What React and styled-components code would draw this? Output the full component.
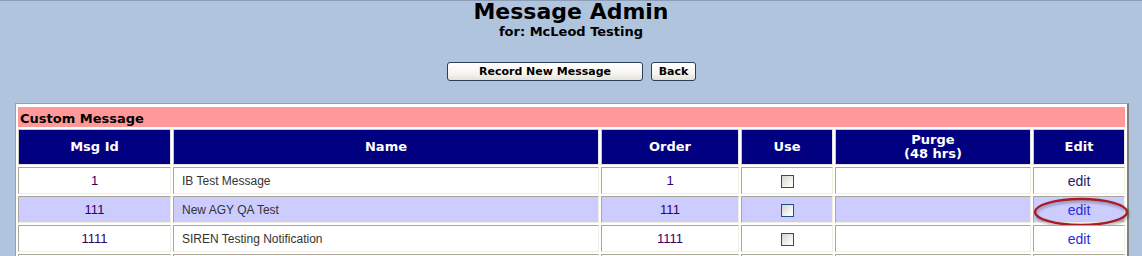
import React from 'react';
import styled, { createGlobalStyle } from 'styled-components';

const GlobalStyle = createGlobalStyle`
  * { box-sizing: border-box; }
  html, body { margin: 0; padding: 0; }
  body {
    background: #b0c4de;
    border-top: 1px solid #8c9db5;
    font-family: "DejaVu Sans", Verdana, sans-serif;
    height: 256px;
    overflow: hidden;
  }
`;

const Page = styled.div`
  display: flex;
  flex-direction: column;
`;

const Heading = styled.div`
  display: flex;
  flex-direction: column;
  align-items: center;
  color: #000;
  font-weight: bold;
`;

const Title = styled.h1`
  margin: 0;
  font-size: 22px;
  line-height: 22px;
  font-weight: bold;
`;

const Subtitle = styled.div`
  font-size: 13px;
  line-height: 16px;
  margin-top: 1px;
`;

const Toolbar = styled.div`
  display: flex;
  justify-content: center;
  gap: 8px;
  margin-top: 22px;
  margin-left: 1px;
`;

const Button = styled.button`
  width: ${p => p.$width}px;
  height: 19px;
  padding: 0;
  border: 1px solid #2b3f5c;
  border-radius: 3px;
  background: linear-gradient(#ffffff 0%, #f6f5f1 60%, #e3e1d8 100%);
  font-family: "DejaVu Sans", Verdana, sans-serif;
  font-size: 11px;
  font-weight: bold;
  color: #000;
  line-height: 17px;
  cursor: pointer;
`;

const Panel = styled.div`
  margin: 22px 0 0 15px;
  width: 1114px;
  background: #fff;
  border-top: 1px solid #a0a0a0;
  border-left: 1px solid #a0a0a0;
  border-right: 2px solid #808080;
  border-bottom: 2px solid #808080;
  padding: 3px 2px 2px 2px;
  display: flex;
  flex-direction: column;
  gap: 2px;
`;

const SectionTitle = styled.div`
  height: 20px;
  background: #ff9999;
  padding: 3px 0 0 2px;
  font-size: 13px;
  line-height: 17px;
  font-weight: bold;
  color: #000;
`;

const Row = styled.div`
  display: grid;
  grid-template-columns: 153px 426px 138px 92px 196px 92px;
  column-gap: 2px;
  height: ${p => (p.$head ? 36 : 27)}px;
`;

const Cell = styled.div`
  position: relative;
  display: flex;
  align-items: center;
  justify-content: ${p => (p.$left ? 'flex-start' : 'center')};
  padding-left: ${p => (p.$left ? 8 : 0)}px;
  border-top: 1px solid #aca899;
  border-left: 1px solid #aca899;
  border-bottom: 1px solid #f1efe2;
  border-right: 1px solid #f1efe2;
  background: ${p => p.$bg};
  font-family: "Liberation Sans", Arial, sans-serif;
  font-size: ${p => (p.$left ? 12 : 13)}px;
  color: ${p => (p.$left ? '#333' : '#330066')};
  white-space: nowrap;
`;

const HeadCell = styled(Cell)`
  background: #000080;
  color: #fff;
  font-family: "DejaVu Sans", Verdana, sans-serif;
  font-size: 13px;
  font-weight: bold;
  line-height: 14px;
  text-align: center;
  border-color: #c9c7bd #e8e6de #e8e6de #c9c7bd;
`;

const Check = styled.span`
  display: block;
  width: 13px;
  height: 13px;
  margin-top: 1px;
  border: 1px solid #1f5280;
  background: linear-gradient(135deg, #d3d3cc 0%, #f2f2ee 60%, #ffffff 100%);
`;

const EditLink = styled.a`
  font-family: "Liberation Sans", Arial, sans-serif;
  font-size: 14px;
  text-decoration: none;
  color: ${p => (p.$visited ? '#1c1c6e' : '#2b2bd9')};
  cursor: pointer;
`;

const Circle = styled.svg`
  position: absolute;
  left: -1px;
  top: 1px;
  width: 96px;
  height: 30px;
  overflow: visible;
  pointer-events: none;
`;

const columns = ['Msg Id', 'Name', 'Order', 'Use', ['Purge', '(48 hrs)'], 'Edit'];

const messages = [
  { id: '1', name: 'IB Test Message', order: '1', visited: true },
  { id: '111', name: 'New AGY QA Test', order: '111', circled: true },
  { id: '1111', name: 'SIREN Testing Notification', order: '1111' },
];

const App = () => {
  return (
    <>
      <GlobalStyle />
      <Page>
        <Heading>
          <Title>Message Admin</Title>
          <Subtitle>for: McLeod Testing</Subtitle>
        </Heading>

        <Toolbar>
          <Button $width={196}>Record New Message</Button>
          <Button $width={45}>Back</Button>
        </Toolbar>

        <Panel>
          <SectionTitle>Custom Message</SectionTitle>
          <Row $head>
            {columns.map((col, i) => (
              <HeadCell key={i}>
                {Array.isArray(col) ? <span>{col[0]}<br />{col[1]}</span> : col}
              </HeadCell>
            ))}
          </Row>
          {messages.map((msg, i) => {
            const bg = i % 2 === 1 ? '#ccccff' : '#ffffff';
            return (
              <Row key={msg.id}>
                <Cell $bg={bg}>{msg.id}</Cell>
                <Cell $bg={bg} $left>{msg.name}</Cell>
                <Cell $bg={bg}>{msg.order}</Cell>
                <Cell $bg={bg}><Check /></Cell>
                <Cell $bg={bg} />
                <Cell $bg={bg}>
                  <EditLink $visited={msg.visited}>edit</EditLink>
                  {msg.circled && (
                    <Circle viewBox="0 0 96 30">
                      <defs>
                        <filter id="shadow" x="-20%" y="-40%" width="140%" height="200%">
                          <feDropShadow dx="1" dy="2" stdDeviation="1.5" floodColor="#000" floodOpacity="0.35" />
                        </filter>
                      </defs>
                      <ellipse cx="48" cy="14" rx="46" ry="13" fill="none" stroke="#a31f26" strokeWidth="2.4" filter="url(#shadow)" />
                    </Circle>
                  )}
                </Cell>
              </Row>
            );
          })}
          <Row>
            {columns.map((_, i) => <Cell key={i} $bg="#ffffff" />)}
          </Row>
        </Panel>
      </Page>
    </>
  );
};

export default App;
